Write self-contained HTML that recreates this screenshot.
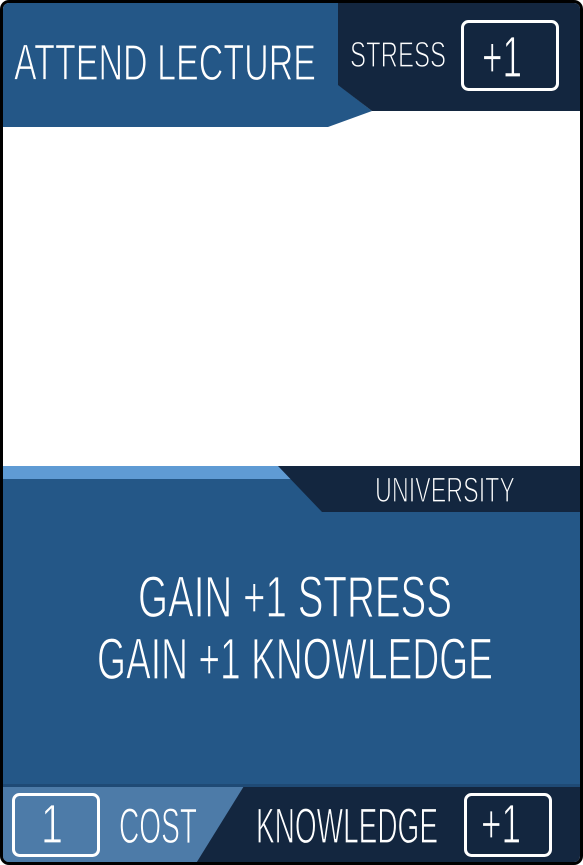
<!DOCTYPE html>
<html><head><meta charset="utf-8"><style>
html,body{margin:0;padding:0;background:#fff;width:583px;height:865px;overflow:hidden}
svg{display:block}
text{font-family:"Liberation Sans Narrow","Liberation Sans",sans-serif;fill:#fff;stroke-width:1.2}
.b{stroke:#245787}.d{stroke:#13263f}.l{stroke:#4d7ba8}
</style></head><body>
<svg width="583" height="865" viewBox="0 0 583 865" xmlns="http://www.w3.org/2000/svg">
<defs><clipPath id="c"><rect x="3" y="3" width="577" height="859" rx="6"/></clipPath></defs>
<rect x="0" y="0" width="583" height="865" rx="9" fill="#000"/>
<g clip-path="url(#c)">
<rect x="0" y="0" width="583" height="865" fill="#fff"/>
<polygon points="0,0 345,0 345,90 372,111 328,127 0,127" fill="#245787"/>
<polygon points="338,0 583,0 583,111 372,111 338,85" fill="#13263f"/>
<rect x="0" y="466" width="300" height="14" fill="#5f9bd4"/>
<rect x="0" y="479" width="583" height="310" fill="#245787"/>
<polygon points="278,466 583,466 583,512 322,512" fill="#13263f"/>
<rect x="0" y="786" width="583" height="80" fill="#13263f"/>
<polygon points="0,786 244,786 195,865 0,865" fill="#4d7ba8"/>
<rect x="0" y="784" width="583" height="3" fill="#1f4a75"/>
</g>
<text class="b" x="14" y="80" font-size="51" textLength="302" lengthAdjust="spacingAndGlyphs">ATTEND LECTURE</text>
<text class="d" x="350" y="67" font-size="36" textLength="96" lengthAdjust="spacingAndGlyphs">STRESS</text>
<rect x="462.5" y="21.5" width="95" height="68" rx="6" fill="none" stroke="#fff" stroke-width="3"/>
<text class="d" x="482" y="77" font-size="58" textLength="40" lengthAdjust="spacingAndGlyphs">+1</text>
<text class="d" x="375" y="502" font-size="35" textLength="140" lengthAdjust="spacingAndGlyphs">UNIVERSITY</text>
<text class="b" x="138" y="617" font-size="58" textLength="314" lengthAdjust="spacingAndGlyphs">GAIN +1 STRESS</text>
<text class="b" x="97" y="679" font-size="58" textLength="396" lengthAdjust="spacingAndGlyphs">GAIN +1 KNOWLEDGE</text>
<rect x="13.5" y="794.5" width="85" height="61" rx="6" fill="none" stroke="#fff" stroke-width="3"/>
<text class="l" x="41" y="843" font-size="56" textLength="22" lengthAdjust="spacingAndGlyphs">1</text>
<text class="l" x="119" y="843" font-size="50" textLength="78" lengthAdjust="spacingAndGlyphs">COST</text>
<text class="d" x="256" y="843" font-size="50" textLength="182" lengthAdjust="spacingAndGlyphs">KNOWLEDGE</text>
<rect x="465.5" y="794.5" width="85" height="61" rx="6" fill="none" stroke="#fff" stroke-width="3"/>
<text class="d" x="481" y="843" font-size="56" textLength="40" lengthAdjust="spacingAndGlyphs">+1</text>
</svg>
</body></html>
